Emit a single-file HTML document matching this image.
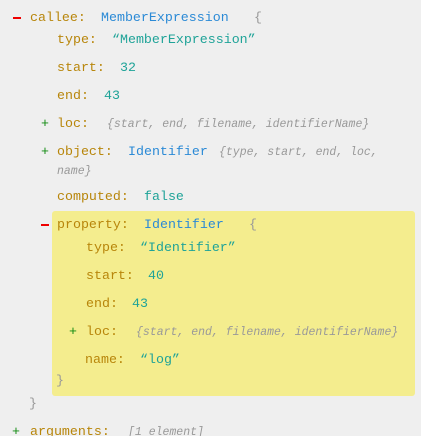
<!DOCTYPE html>
<html><head><meta charset="utf-8"><style>
html,body{margin:0;padding:0;background:#efefef;width:421px;height:436px;overflow:hidden;position:relative;font-family:"Liberation Mono","Noto Sans CJK SC",monospace;font-size:13.3px}
.r{position:absolute;white-space:pre;line-height:16px}
.k{color:#b8860b}.b{color:#2b8ad6}.t{color:#1fa398}.g{color:#999;font-style:italic;font-size:11.5px}
.p{color:#999}.pl{color:#108a10}
.mb{position:absolute;width:8px;height:2px;background:#e00}
.hl{position:absolute;left:52px;top:211px;width:363px;height:185px;background:#f4ed8e;border-radius:3px}
</style></head><body>
<div class="hl"></div>
<div class="mb" style="left:13px;top:17px"></div>
<div class="r k" style="left:30px;top:10px">callee:</div>
<div class="r b" style="left:101px;top:10px">MemberExpression</div>
<div class="r p" style="left:254px;top:10px">{</div>
<div class="r k" style="left:57px;top:32px">type:</div>
<div class="r t" style="left:112px;top:32px">“MemberExpression”</div>
<div class="r k" style="left:57px;top:60px">start:</div>
<div class="r t" style="left:120px;top:60px">32</div>
<div class="r k" style="left:57px;top:88px">end:</div>
<div class="r t" style="left:104px;top:88px">43</div>
<div class="r pl" style="left:41px;top:116px">+</div>
<div class="r k" style="left:57px;top:116px">loc:</div>
<div class="r g" style="left:107px;top:117px">{start, end, filename, identifierName}</div>
<div class="r pl" style="left:41px;top:144px">+</div>
<div class="r k" style="left:57px;top:144px">object:</div>
<div class="r b" style="left:128px;top:144px">Identifier</div>
<div class="r g" style="left:219px;top:145px">{type, start, end, loc,</div>
<div class="r g" style="left:57px;top:164px">name}</div>
<div class="r k" style="left:57px;top:189px">computed:</div>
<div class="r t" style="left:144px;top:189px">false</div>
<div class="mb" style="left:41px;top:224px"></div>
<div class="r k" style="left:57px;top:217px">property:</div>
<div class="r b" style="left:144px;top:217px">Identifier</div>
<div class="r p" style="left:249px;top:217px">{</div>
<div class="r k" style="left:86px;top:240px">type:</div>
<div class="r t" style="left:140px;top:240px">“Identifier”</div>
<div class="r k" style="left:86px;top:268px">start:</div>
<div class="r t" style="left:148px;top:268px">40</div>
<div class="r k" style="left:86px;top:296px">end:</div>
<div class="r t" style="left:132px;top:296px">43</div>
<div class="r pl" style="left:69px;top:324px">+</div>
<div class="r k" style="left:86px;top:324px">loc:</div>
<div class="r g" style="left:136px;top:325px">{start, end, filename, identifierName}</div>
<div class="r k" style="left:85px;top:352px">name:</div>
<div class="r t" style="left:140px;top:352px">“log”</div>
<div class="r p" style="left:56px;top:373px">}</div>
<div class="r p" style="left:29px;top:396px">}</div>
<div class="r pl" style="left:12px;top:424px">+</div>
<div class="r k" style="left:30px;top:424px">arguments:</div>
<div class="r g" style="left:128px;top:425px">[1 element]</div>
</body></html>
